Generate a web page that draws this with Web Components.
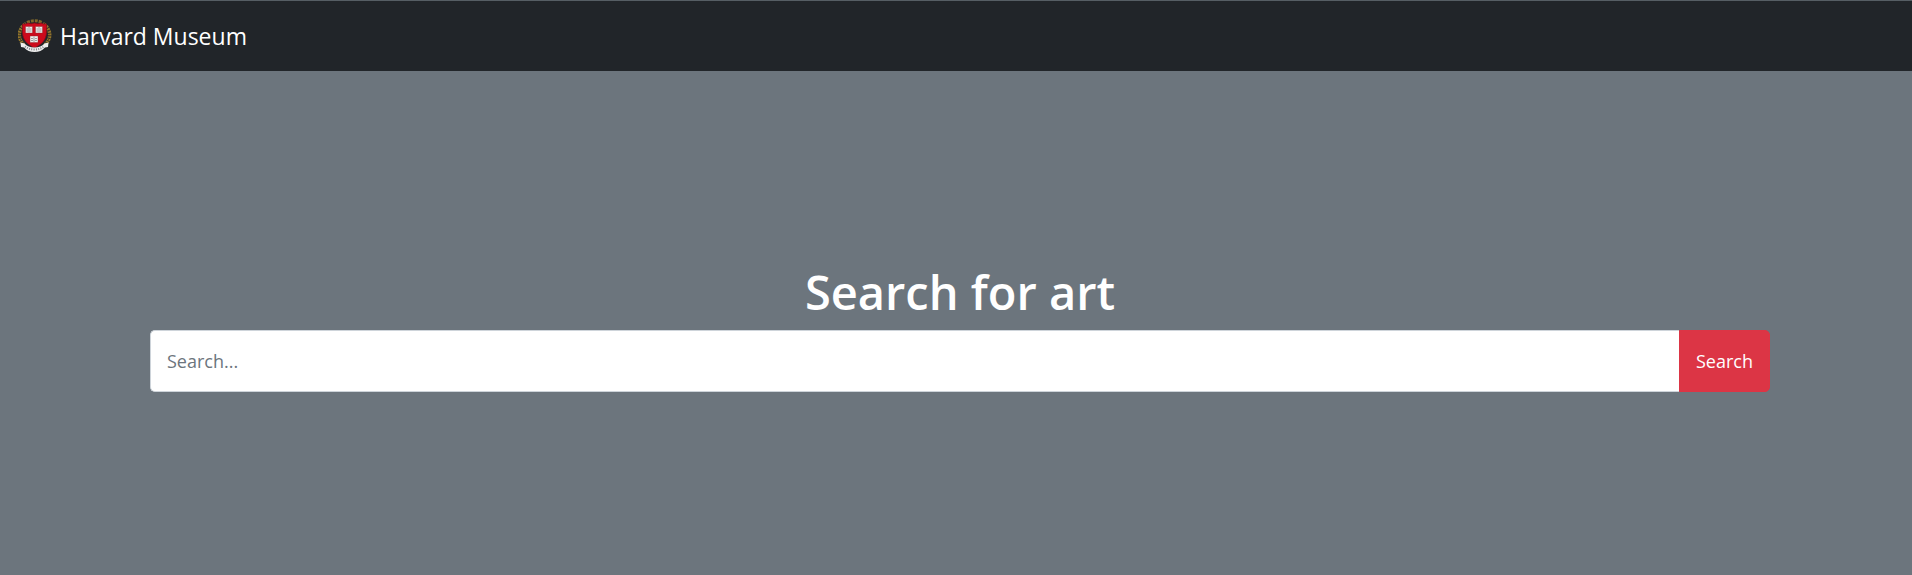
<!DOCTYPE html>
<html lang="en">
<head>
<meta charset="utf-8">
<meta name="viewport" content="width=device-width, initial-scale=1">
<title>Harvard Museum</title>
<style>
html { height: 100%; }
body { margin: 0; min-height: 100%; display: flex; flex-direction: column; background: #6c757d; font-family: "Open Sans", "Noto Sans", sans-serif; font-size: 18px; line-height: 30px; }
museum-hero { flex: 1; }
</style>
</head>
<body>
<museum-navbar><museum-crest slot="logo"></museum-crest>Harvard Museum</museum-navbar>
<museum-hero>
  <span slot="title">Search for art</span>
  <museum-search></museum-search>
</museum-hero>
<script>
class Element extends HTMLElement {
  constructor() {
    super();
    this.attachShadow({ mode: 'open' }).innerHTML = this.constructor.markup;
  }
}

customElements.define('museum-crest', class extends Element {
  static markup = `
<style>
:host { display: block; width: 34px; height: 34px; }
svg { display: block; width: 100%; height: 100%; }
</style>
<svg viewBox="0 0 34 34" aria-hidden="true">
  <g fill="none" stroke="#94762c">
    <path d="M6 26C-1 19 0 10 8 4.500M27 26C34 19 33 10 25 4.500" stroke-width="3.500" stroke-dasharray="2 .7"/>
    <path d="M9 3.500Q16.500 0 24 3.500" stroke-width="3" stroke-dasharray="3 1" stroke="#80682c"/>
    <path d="M4 24C1 18 1 12 6 7M29 24C32 18 32 12 27 7" stroke="#3d351f" stroke-dasharray="1 2"/>
  </g>
  <path d="M4.500 5Q8 5.500 10 4Q13 5.500 16.500 4Q20 5.500 23 4Q25 5.500 28.500 5V13C28.500 21 23 26 16.500 29C10 26 4.500 21 4.500 13Z" fill="#cc0a1c" stroke="#860b19" stroke-width=".7"/>
  <g fill="#efedeb" stroke="#8b2226" stroke-width=".4">
    <path d="M7.500 7.500H14.500V14H7.500ZM17.500 7.500H24.500V14H17.500ZM12 17H20V23.500H12Z"/>
  </g>
  <path d="M11 8V13.500M21 8V13.500M16 17.500V23M8.500 10H10M12 10H13.500M8.500 12H10M12 12H13.500M18.500 10H20M22 10H23.500M18.500 12H20M22 12H23.500M13 19.500H15M17 19.500H19M13 21.500H15M17 21.500H19" fill="none" stroke="#8a8a8d" stroke-width=".8"/>
  <path d="M2.500 23.500L6.500 24.500Q10 28.500 16.500 28.500Q23 28.500 26.500 24.500L30.500 23.500L30 28L27 28.500Q23 33 16.500 33Q10 33 6 28.500L3 28Z" fill="#ededed"/>
  <path d="M7 27.500Q11 30.500 16.500 30.500Q22 30.500 26 27.500" fill="none" stroke="#858589" stroke-width="2" stroke-dasharray="1 1.300"/>
</svg>`;
});

customElements.define('museum-navbar', class extends Element {
  static markup = `
<style>
:host { display: block; background: #212529; border-top: 1px solid #565e64; color: #fff; }
nav { padding: 16px 18px; }
a { display: flex; width: fit-content; align-items: center; gap: 8px; color: inherit; text-decoration: none; font-size: 23px; line-height: 38px; }
</style>
<nav><a href="#"><slot name="logo"></slot><span><slot></slot></span></a></nav>`;
});

customElements.define('museum-hero', class extends Element {
  static markup = `
<style>
:host { display: flex; flex-direction: column; justify-content: center; padding: 8px 142px 0 150px; }
h1 { margin: 0 0 8px; color: #fff; font-size: 47px; font-weight: 600; line-height: 60px; text-align: center; }
</style>
<main><h1><slot name="title"></slot></h1><slot></slot></main>`;
});

customElements.define('museum-search', class extends Element {
  static markup = `
<style>
:host { display: block; }
form { display: flex; margin: 0; }
input, button { box-sizing: border-box; height: 62px; margin: 0; padding: 0 16px; font: inherit; }
input { flex: 1; min-width: 0; border: 1px solid #ced4da; border-right: 0; border-radius: 5px 0 0 5px; background: #fff; color: #212529; }
input::placeholder { color: #6c757d; opacity: 1; }
button { border: 1px solid #dc3545; border-radius: 0 5px 5px 0; background: #dc3545; color: #fff; }
</style>
<form role="search">
  <input type="search" name="q" placeholder="Search..." aria-label="Search for art">
  <button type="submit">Search</button>
</form>`;
});
</script>
</body>
</html>
